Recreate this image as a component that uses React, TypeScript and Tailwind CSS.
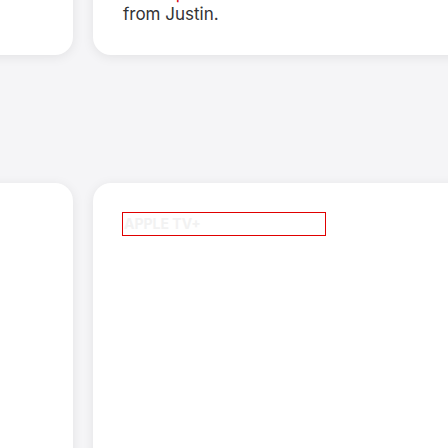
export default function App() {
  return (
    <div className="h-[448px] w-[448px] overflow-hidden bg-[#f5f5f7] font-['Inter',sans-serif]">
      <div className="-mt-[145px] flex flex-col gap-[128px]">
        {/* top row */}
        <div className="flex gap-[20px]">
          <div className="-ml-[200px] h-[200px] w-[273px] shrink-0 rounded-[18px] bg-white shadow-[0_2px_12px_rgba(0,0,0,0.08)]" />
          <div className="flex h-[200px] w-[500px] shrink-0 flex-col justify-end rounded-[18px] bg-white pb-[30px] pl-[30px] shadow-[0_2px_12px_rgba(0,0,0,0.08)]">
            <p className="text-[17px] font-normal leading-[21px] text-[#333336]">
              Listen <span className="text-[#d70015]">p</span>reviews of the new album
              <br />
              from Justin.
            </p>
          </div>
        </div>

        {/* bottom row */}
        <div className="flex gap-[20px]">
          <div className="-ml-[200px] h-[400px] w-[273px] shrink-0 rounded-[18px] bg-white shadow-[0_2px_12px_rgba(0,0,0,0.08)]" />
          <div className="h-[400px] w-[500px] shrink-0 rounded-[18px] bg-white pl-[29px] pt-[29px] shadow-[0_2px_12px_rgba(0,0,0,0.08)]">
            <div className="h-[24px] w-[204px] border border-[#e00000] pl-[1px]">
              <span className="block text-[14px] font-bold leading-[22px] text-[#f2f2f2]">
                APPLE TV+
              </span>
            </div>
          </div>
        </div>
      </div>
    </div>
  );
}
